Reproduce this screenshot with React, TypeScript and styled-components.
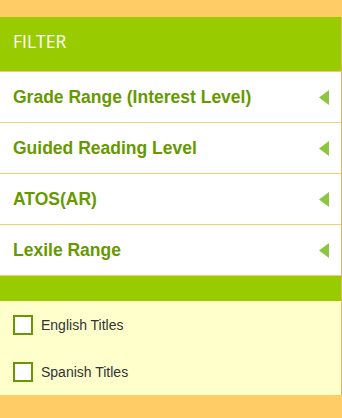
import React from "react";
import styled, { createGlobalStyle } from "styled-components";

const GlobalStyle = createGlobalStyle`
  html, body {
    margin: 0;
    padding: 0;
    background: #ffcc66;
  }
  body {
    font-family: "Liberation Sans", Arial, sans-serif;
  }
`;

const Panel = styled.aside`
  margin-top: 17px;
  width: 342px;
  box-sizing: border-box;
  border-right: 1px solid #e3b263;
`;

const Header = styled.div`
  height: 55px;
  box-sizing: border-box;
  padding: 12px 13px 0;
  background: #99cc00;
  border-bottom: 1px solid #f4c86a;
  color: #ffffff;
  font-family: "Open Sans", "Liberation Sans", sans-serif;
  font-size: 17.5px;
  line-height: 24px;
`;

const Section = styled.div`
  height: 51px;
  box-sizing: border-box;
  display: flex;
  align-items: center;
  justify-content: space-between;
  padding: 0 12px 0 13px;
  background: #ffffff;
  border-bottom: 1px solid #f6cc7a;
  color: #669900;
  font-size: 17.5px;
  font-weight: bold;
  cursor: pointer;

  &:last-of-type {
    border-bottom: none;
  }
`;

const Caret = () => (
  <svg width="10" height="15" viewBox="0 0 10 15" aria-hidden="true">
    <polygon points="10,0 10,15 0,7.5" fill="#8cc63f" />
  </svg>
);

const Divider = styled.div`
  height: 25px;
  background: #99cc00;
`;

const Options = styled.div`
  background: #ffffcc;
`;

const Option = styled.label`
  height: 47px;
  display: flex;
  align-items: center;
  gap: 8px;
  padding-left: 13px;
  color: #333333;
  font-size: 14px;
`;

const Box = styled.span`
  width: 20px;
  height: 20px;
  box-sizing: border-box;
  background: #ffffff;
  border: 2px solid #669900;
`;

const sections = [
  "Grade Range (Interest Level)",
  "Guided Reading Level",
  "ATOS(AR)",
  "Lexile Range",
];

const options = ["English Titles", "Spanish Titles"];

export default function App() {
  return (
    <>
      <GlobalStyle />
      <Panel>
        <Header>FILTER</Header>
        {sections.map((s) => (
          <Section key={s}>
            <span>{s}</span>
            <Caret />
          </Section>
        ))}
        <Divider />
        <Options>
          {options.map((o) => (
            <Option key={o}>
              <Box />
              {o}
            </Option>
          ))}
        </Options>
      </Panel>
    </>
  );
}
